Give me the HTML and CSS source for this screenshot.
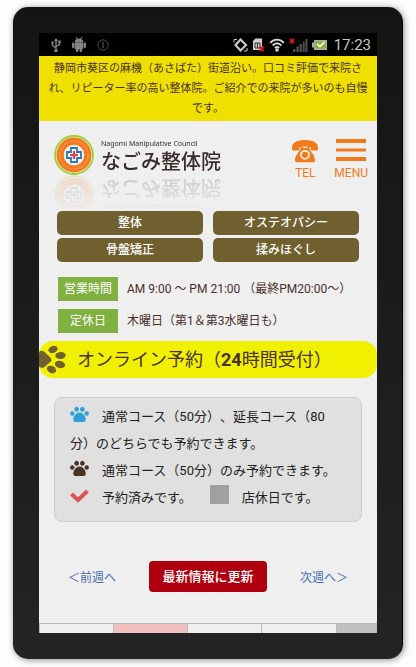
FILE: index.html
```
<!DOCTYPE html>
<html lang="ja">
<head>
  <meta charset="UTF-8">
  <meta name="viewport" content="width=device-width, initial-scale=1.0">
  <title>なごみ整体院</title>
  <link rel="stylesheet" href="styles.css">
</head>
<body>

  <!-- shared paw shape -->
  <svg class="defs" aria-hidden="true">
    <symbol id="paw" viewBox="0 0 20 17">
      <ellipse cx="2.400" cy="7.500" rx="2.300" ry="2.400"/>
      <ellipse cx="7" cy="3" rx="2.400" ry="2.700"/>
      <ellipse cx="13" cy="3" rx="2.400" ry="2.700"/>
      <ellipse cx="17.600" cy="7.500" rx="2.300" ry="2.400"/>
      <path d="M10 6.300c3 0 4.600 2 5.800 4.200 1.500 2.800.8 6-2 6H6.200c-2.800 0-3.500-3.200-2-6C5.400 8.300 7 6.300 10 6.300z"/>
    </symbol>
  </svg>

  <div class="phone">
    <div class="screen">

      <div class="status-bar">
        <div class="status-left">
          <svg width="10" height="16" viewBox="0 0 10 16" fill="none" stroke="#858585" stroke-width="1.4">
            <path d="M5 3v11M5 11L1.500 8.500V6M5 9.500l3.500-2V5"/>
            <path d="M3 4l2-3 2 3z" fill="#858585" stroke="none"/>
            <circle cx="5" cy="13.600" r="1.700" fill="#858585" stroke="none"/>
            <circle cx="1.500" cy="5.500" r="1.200" fill="#858585" stroke="none"/>
            <path d="M7.200 3.500h2.500V6H7.200z" fill="#858585" stroke="none"/>
          </svg>
          <svg width="14" height="15" viewBox="0 0 14 15" fill="#858585">
            <path d="M2.600 5C2.800 2.800 4.600 1.400 7 1.400S11.200 2.800 11.400 5z"/>
            <path d="M4 0l1.200 2M10 0L8.800 2" stroke="#858585"/>
            <rect x="2.600" y="5.300" width="8.800" height="7" rx="1"/>
            <rect x="0" y="5.500" width="2.200" height="5.500" rx="1"/>
            <rect x="11.800" y="5.500" width="2.200" height="5.500" rx="1"/>
            <rect x="4" y="11" width="2.400" height="4" rx="1"/>
            <rect x="7.600" y="11" width="2.400" height="4" rx="1"/>
          </svg>
          <svg width="12" height="12" viewBox="0 0 12 12" fill="none" stroke="#484848">
            <circle cx="6" cy="6" r="5.200"/>
            <path d="M6 3v6" stroke-width="1.400"/>
          </svg>
        </div>
        <div class="status-right">
          <svg width="15" height="14" viewBox="0 0 15 14" fill="none" stroke="#c8c8c8" stroke-width="2.2">
            <path d="M7.500 1.500L13 7l-5.500 5.500L2.500 7z"/>
            <path d="M1 4.500V1.500h3M11 13h3v-3" stroke-width="1"/>
          </svg>
          <svg width="13" height="14" viewBox="0 0 13 14">
            <path d="M1 3l2.500-2.500H10V12H1z" fill="#d0d0d0"/>
            <path d="M3 5h5v5H3zM5.500 5v5" fill="none" stroke="#333"/>
            <path d="M7.500 8.500l4 4.500M11.500 8.500l-4 4.500" stroke="#e01818" stroke-width="2"/>
          </svg>
          <svg width="16" height="14" viewBox="0 0 16 14" fill="none" stroke="#d5d5d5" stroke-width="1.800">
            <path d="M1.200 4.800c4-4.200 9.600-4.200 13.600 0M3.600 7.500c2.700-2.700 6.100-2.700 8.800 0M5.800 10c1.400-1.300 3-1.300 4.400 0"/>
            <circle cx="8" cy="12" r="1.800" fill="#d5d5d5" stroke="none"/>
          </svg>
          <svg width="19" height="14" viewBox="0 0 19 14" fill="#4c4c4c">
            <path d="M4 11h2.500v3H4zM7.300 8.500h2.500V14H7.300zM10.500 6H13v8h-2.500zM13.700 3.500h2V14h-2zM16.300 1H18.500v13h-2.200z"/>
            <path d="M1 .8l4 4.400M5 .8L1 5.200" stroke="#e01818" stroke-width="1.800"/>
          </svg>
          <svg width="15" height="12" viewBox="0 0 15 12">
            <path d="M2 1h13v10H2V8.500H0v-5h2z" fill="#aaa"/>
            <path d="M3.200 2.500h10.500v7H3.200z" fill="#86ae32"/>
            <path d="M5 5l3 2.500L12.500 3" fill="none" stroke="#f2f2e8" stroke-width="1.800"/>
          </svg>
          <span class="clock">17:23</span>
        </div>
      </div>

      <p class="notice">静岡市葵区の麻機（あさばた）街道沿い。口コミ評価で来院され、リピーター率の高い整体院。ご紹介での来院が多いのも自慢です。</p>

      <header class="header">
        <a class="logo" href="#">
          <svg width="40" height="40" viewBox="0 0 40 40">
            <circle cx="20" cy="20" r="19" fill="#f2f2df" stroke="#9bd02e" stroke-width="1.800"/>
            <circle cx="20" cy="20" r="13.800" fill="none" stroke="#f47a22" stroke-width="7.400"/>
            <circle cx="20" cy="20" r="14" fill="none" stroke="#fba56a" stroke-width="1.600" stroke-dasharray="1 1.200"/>
            <circle cx="20" cy="20" r="10.300" fill="#f4f1ec"/>
            <path d="M17 13h6v4h4v6h-4v4h-6v-4h-4v-6h4z" fill="#fff" stroke="#2878b8" stroke-width="1.800"/>
            <path d="M20 16v8M16 20h8" stroke="#e8364a" stroke-width="2.200"/>
          </svg>
          <span class="logo-text">
            <span class="logo-sub">Nagomi Manipulative Council</span>
            <span class="logo-name">なごみ整体院</span>
          </span>
        </a>
        <div class="header-actions">
          <a class="action" href="#">
            <svg width="28" height="24" viewBox="0 0 28 24" fill="#f27a1a">
              <path d="M1 10C.2 5 4 1 14 1s13.800 4 13 9c-.1 1.200-.8 1.600-2 1.600h-3.600c-1.200 0-1.700-.6-1.700-1.700V8.300c-3.700-1-7.700-1-11.400 0v1.600c0 1.100-.5 1.700-1.700 1.700H3c-1.200 0-1.900-.4-2-1.600z"/>
              <path d="M9.500 7h2v2h5V7h2v2.500c.3 2.500 5.500 6.500 5.500 11.500 0 1.500-.6 2.300-2 2.300H6c-1.400 0-2-.8-2-2.300 0-5 5.200-9 5.500-11.500z"/>
              <circle cx="14" cy="15.800" r="4" fill="none" stroke="#efefef" stroke-width="1.800"/>
            </svg>
            <span>TEL</span>
          </a>
          <button class="action" type="button">
            <svg width="30" height="24" viewBox="0 0 30 24" fill="#f27a1a">
              <path d="M0 0h30v4H0zM0 9.500h30v3H0zM0 18h30v4H0z"/>
            </svg>
            <span>MENU</span>
          </button>
        </div>
      </header>

      <nav class="menu">
        <a href="#">整体</a>
        <a href="#">オステオパシー</a>
        <a href="#">骨盤矯正</a>
        <a href="#">揉みほぐし</a>
      </nav>

      <dl class="hours">
        <dt>営業時間</dt>
        <dd>AM 9:00 ～ PM 21:00 （最終PM20:00～）</dd>
        <dt>定休日</dt>
        <dd>木曜日（第1＆第3水曜日も）</dd>
      </dl>

      <h1 class="banner">
        <svg class="banner-paw" width="30" height="37" viewBox="0 0 30 37">
          <path d="M0 10.500c3-1.500 5-.5 7.500 2.500 2.200 2.500 4.800 3 4.800 5.800S9.500 22 7.500 24.300C5 27 3 27.500 0 26z"/>
          <ellipse cx="14" cy="8.500" rx="4.800" ry="3.500" transform="rotate(-22 14 8.500)"/>
          <ellipse cx="21.500" cy="14.500" rx="5.200" ry="3.500" transform="rotate(-5 21.500 14.500)"/>
          <ellipse cx="21" cy="23.500" rx="5.200" ry="3.500" transform="rotate(15 21 23.500)"/>
          <ellipse cx="12.500" cy="28.500" rx="4.800" ry="3.500" transform="rotate(25 12.500 28.500)"/>
        </svg>
        オンライン予約（<b>24</b>時間受付）
      </h1>

      <div class="legend">
        <p><svg class="mark paw-blue" width="19" height="17"><use href="#paw"/></svg>通常コース（50分）、延長コース（80分）のどちらでも予約できます。</p>
        <p><svg class="mark paw-brown" width="19" height="17"><use href="#paw"/></svg>通常コース（50分）のみ予約できます。</p>
        <p class="legend-pair">
          <span><svg class="mark" width="19" height="17" viewBox="0 0 19 17"><path d="M1.500 7L8 13 17.500 4" fill="none" stroke="#dc5353" stroke-width="4"/></svg>予約済みです。</span>
          <span><i class="mark closed"></i>店休日です。</span>
        </p>
      </div>

      <div class="week-nav">
        <a href="#">＜前週へ</a>
        <button class="refresh" type="button">最新情報に更新</button>
        <a href="#">次週へ＞</a>
      </div>

      <table class="calendar">
        <tr>
          <td></td>
          <td class="holiday"></td>
          <td></td>
          <td></td>
          <td class="off"></td>
        </tr>
      </table>

    </div>
  </div>

</body>
</html>
```

FILE: styles.css
```
* {
  box-sizing: border-box;
}

body {
  margin: 0;
  padding: 7px 13px 8px;
  background: #fdfdfd;
  font-family: Roboto, "Noto Sans CJK JP", sans-serif;
  font-size: 12px;
  color: #4a302c;
  text-spacing-trim: space-all;
}

a {
  text-decoration: none;
  color: inherit;
}

button {
  border: 0;
  padding: 0;
  background: none;
  font-family: inherit;
  cursor: pointer;
}

svg {
  display: block;
}

.defs {
  display: none;
}

.phone {
  padding: 26px 25px 26px 26px;
  border-right: 1px solid #000;
  border-radius: 15px;
  background: linear-gradient(#141414, #242424);
  box-shadow: 1px 1px 6px rgba(0, 0, 0, 0.45);
}

.screen {
  background: #efefef;
  overflow: hidden;
}

/* status bar */
.status-bar {
  display: flex;
  justify-content: space-between;
  align-items: center;
  height: 23px;
  padding: 0 6px 0 12px;
  background: #000;
}

.status-left {
  display: flex;
  align-items: center;
  gap: 11px;
}

.status-right {
  display: flex;
  align-items: center;
  gap: 4px;
}

.clock {
  padding-left: 3px;
  font-size: 15px;
  line-height: 20px;
  color: #c8c8c8;
}

.notice {
  margin: 0;
  padding: 3px 5px 2px;
  background: #efe000;
  font-size: 11px;
  line-height: 20px;
  text-align: center;
}

/* header */
.header {
  display: flex;
  justify-content: space-between;
  align-items: flex-start;
  height: 90px;
  padding: 14px 9px 0 15px;
}

.logo {
  display: flex;
  gap: 7px;
  height: 40px;
  color: #3a2b2b;
  -webkit-box-reflect: below 0 linear-gradient(transparent, rgba(0, 0, 0, 0.2));
}

.logo-text {
  display: flex;
  flex-direction: column;
  padding-top: 4px;
}

.logo-sub {
  font-family: "Noto Sans", sans-serif;
  font-size: 7px;
  line-height: 10px;
}

.logo-name {
  font-size: 20px;
  font-weight: 500;
  line-height: 26px;
}

.header-actions {
  display: flex;
  gap: 15px;
  padding-top: 4px;
}

.action {
  display: flex;
  flex-direction: column;
  align-items: center;
  gap: 2px;
  font-size: 12px;
  line-height: 16px;
  color: #f27a1a;
}

/* treatment menu */
.menu {
  display: grid;
  grid-template-columns: 1fr 1fr;
  gap: 3px 10px;
  padding: 0 18px;
}

.menu a {
  border-radius: 5px;
  background: #70602f;
  color: #fff;
  font-weight: 500;
  line-height: 24px;
  text-align: center;
}

.hours {
  display: grid;
  grid-template-columns: 60px 1fr;
  gap: 8px 9px;
  margin: 15px 19px 8px;
  line-height: 24px;
}

.hours dt {
  background: #80b040;
  color: #fff;
  text-align: center;
}

.hours dd {
  margin: 0;
  white-space: nowrap;
}

.banner {
  position: relative;
  margin: 0;
  padding-left: 38px;
  border-radius: 14px;
  background: #f0f000;
  overflow: hidden;
  font-size: 18px;
  font-weight: 400;
  line-height: 37px;
}

.banner-paw {
  position: absolute;
  top: 0;
  left: 0;
  fill: #70602f;
}

/* legend */
.legend {
  margin: 19px 15px 0;
  padding: 5px 15px 10px;
  border: 1px solid #ccc;
  border-radius: 8px;
  background: #e0e0e0;
  color: #222;
  font-size: 13px;
  line-height: 27px;
}

.legend p {
  margin: 0;
}

.legend-pair {
  display: flex;
  gap: 18px;
}

.mark {
  display: inline-block;
  margin-right: 13px;
  vertical-align: -2px;
}

.paw-blue {
  fill: #30a0d8;
}

.paw-brown {
  fill: #483424;
}

.closed {
  width: 19px;
  height: 19px;
  background: #a0a0a0;
}

/* week navigation */
.week-nav {
  display: flex;
  justify-content: space-between;
  align-items: center;
  margin: 39px 29px 31px;
  color: #4870b0;
}

.refresh {
  padding: 0 13px;
  border-radius: 4px;
  background: #b0000f;
  color: #fff;
  font-size: 13px;
  font-weight: 500;
  line-height: 31px;
}

.calendar {
  width: 100%;
  table-layout: fixed;
  border-collapse: collapse;
}

.calendar td {
  width: 22%;
  height: 9px;
  padding: 0;
  border: 1px solid #bbb;
  border-bottom: 0;
}

.calendar .holiday {
  background: #f0c0c0;
}

.calendar .off {
  width: 12%;
  background: #c0c0c0;
}
```
